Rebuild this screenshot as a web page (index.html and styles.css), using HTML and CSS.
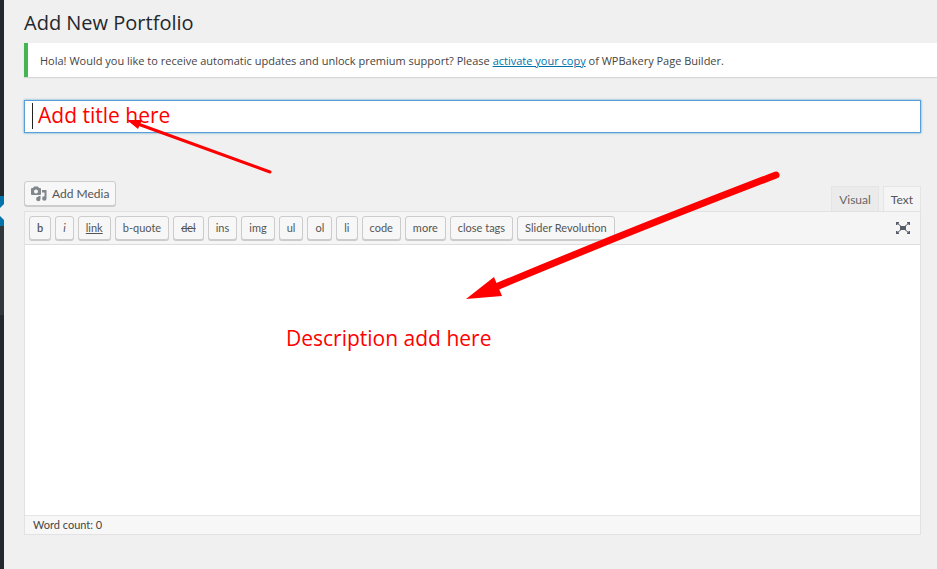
FILE: index.html
```html
<!DOCTYPE html>
<html lang="en">
<head>
<meta charset="utf-8">
<title>Add New Portfolio</title>
<link rel="stylesheet" href="styles.css">
</head>
<body>
<nav class="menu" aria-label="Admin menu">
  <div class="menu-above"></div>
  <div class="menu-current"></div>
  <div class="menu-sub"></div>
</nav>
<main class="content">
  <h1>Add New Portfolio</h1>
  <div class="notice">Hola! Would you like to receive automatic updates and unlock premium support? Please <a href="#">activate your copy</a> of WPBakery Page Builder.</div>
  <form class="editor-form">
    <div class="title-wrap">
      <input class="title" type="text" aria-label="Title">
      <span class="caret"></span>
      <span class="mark mark-title">Add title here</span>
    </div>
    <div class="tools">
      <button type="button" class="media">
        <svg width="16" height="16" viewBox="0 0 16 16" aria-hidden="true">
          <path fill="#82878c" fill-rule="evenodd" d="M1 2h1L3 .500h4L8 2h1a1 1 0 0 1 1 1v5a1 1 0 0 1-1 1H1a1 1 0 0 1-1-1V3a1 1 0 0 1 1-1zm4 1.500a2 2 0 1 0 0 4 2 2 0 0 0 0-4z"/>
          <path fill="#82878c" d="M11 4h4.500v8.500a2.200 2.200 0 1 1-2-2.200V6.500H11zM9.500 10v3a2.200 2.200 0 1 1-2-2.200V10z"/>
        </svg>
        <span>Add Media</span>
      </button>
      <div class="tabs">
        <button type="button" class="tab">Visual</button>
        <button type="button" class="tab tab-active">Text</button>
      </div>
    </div>
    <div class="editor">
      <div class="toolbar">
        <button type="button" class="tag bold">b</button>
        <button type="button" class="tag italic">i</button>
        <button type="button" class="tag link">link</button>
        <button type="button" class="tag">b-quote</button>
        <button type="button" class="tag del">del</button>
        <button type="button" class="tag">ins</button>
        <button type="button" class="tag">img</button>
        <button type="button" class="tag">ul</button>
        <button type="button" class="tag">ol</button>
        <button type="button" class="tag">li</button>
        <button type="button" class="tag">code</button>
        <button type="button" class="tag">more</button>
        <button type="button" class="tag">close tags</button>
        <button type="button" class="tag">Slider Revolution</button>
        <button type="button" class="expand" aria-label="Distraction-free writing mode">
          <svg width="16" height="14" viewBox="0 0 16 14" aria-hidden="true">
            <path d="M2 2l12 10M14 2L2 12" stroke="#555d66" stroke-width="1"/>
            <path fill="#555d66" d="M5 5h6v4H5zM1 1h3v1L2 4H1zM15 1h-3v1l2 2h1zM1 13h3v-1l-2-2H1zM15 13h-3v-1l2-2h1z"/>
          </svg>
        </button>
      </div>
      <textarea class="text" aria-label="Description"></textarea>
      <div class="status">Word count: 0</div>
      <span class="mark mark-text">Description add here</span>
    </div>
  </form>
</main>
<svg class="arrows" width="937" height="569" viewBox="0 0 937 569" aria-hidden="true">
  <path d="M270 172L138 124" stroke="#f00" stroke-width="3" stroke-linecap="round"/>
  <path d="M127 120l15 0-4 9z" fill="#f00"/>
  <path d="M776 175Q630 231 496 287" stroke="#f00" stroke-width="7" stroke-linecap="round" fill="none"/>
  <path d="M466 299l28-22 8 19z" fill="#f00"/>
</svg>
</body>
</html>
```
FILE: styles.css
```css
* { box-sizing: border-box; }
body {
  margin: 0;
  min-height: 100vh;
  display: flex;
  background: #f0f0f0;
  color: #444;
  font: 12px/18px Lato, "Noto Sans", sans-serif;
}
button, input, textarea { font: inherit; color: inherit; margin: 0; }
.menu { width: 4px; flex: none; background: #23282d; overflow: hidden; }
.menu-above { height: 196px; }
.menu-current { height: 30px; background: #0073aa; position: relative; }
.menu-current::after {
  content: "";
  position: absolute;
  right: 0;
  top: 8px;
  border: 8px solid transparent;
  border-right-color: #f0f0f0;
  border-left: 0;
}
.menu-sub { height: 89px; background: #32373c; }
.content { flex: 1; min-width: 0; padding-left: 20px; }
h1 { margin: 0; padding: 8px 0 5px; font-family: "Open Sans", sans-serif; font-size: 20px; line-height: 30px; font-weight: 400; color: #23282d; }
.notice {
  background: #fff;
  border-left: 4px solid #46b450;
  box-shadow: 0 1px 1px rgba(0,0,0,.1);
  padding: 9px 12px 7px;
  font-family: "Open Sans", sans-serif;
  font-size: 11px;
}
.notice a { color: #0073aa; }
.editor-form { padding: 23px 16px 0 0; }
.title-wrap { position: relative; }
.title {
  display: block;
  width: 100%;
  height: 33px;
  padding: 2px 8px;
  border: 1px solid #5b9dd9;
  outline: 0;
  background: #fff;
  box-shadow: 0 0 2px rgba(30,140,190,.8);
  font-size: 20px;
}
.caret { position: absolute; left: 8px; top: 3px; width: 1px; height: 26px; background: #222; }
.mark { position: absolute; color: #f00; font-family: "Open Sans", sans-serif; font-size: 21px; line-height: 30px; white-space: nowrap; }
.mark-title { left: 14px; top: 0; }
.mark-text { left: 261px; top: 111px; }
.tools { display: flex; justify-content: space-between; margin-top: 48px; height: 30px; }
.media {
  display: flex;
  align-items: center;
  gap: 5px;
  height: 25px;
  padding: 0 6px;
  border: 1px solid #ccc;
  border-radius: 3px;
  background: #f7f7f7;
  box-shadow: 0 1px 0 #ccc;
  color: #555;
}
.tabs { display: flex; gap: 4px; align-items: flex-start; padding-top: 5px; }
.tab { height: 25px; padding: 4px 7px 3px; border: 1px solid #e5e5e5; border-bottom: 0; background: #ebebeb; color: #666; }
.tab-active { position: relative; height: 26px; background: #f5f5f5; color: #555; }
.editor { position: relative; border: 1px solid #e2e2e2; }
.toolbar { display: flex; gap: 4px; height: 33px; padding: 4px; background: #f5f5f5; border-bottom: 1px solid #ddd; }
.tag {
  height: 24px;
  padding: 0 7px;
  border: 1px solid #ccc;
  border-radius: 3px;
  background: #f7f7f7;
  box-shadow: 0 1px 0 #ccc;
  color: #555;
  font-size: 11px;
  line-height: 20px;
  white-space: nowrap;
}
.bold { font-weight: 600; }
.italic { font-style: italic; }
.link { text-decoration: underline; }
.del { text-decoration: line-through; }
.expand { display: flex; align-items: center; margin-left: auto; padding: 0 5px; border: 0; background: none; }
.text { display: block; width: 100%; height: 270px; border: 0; outline: 0; resize: none; background: #fff; }
.status { padding: 0 8px; border-top: 1px solid #e5e5e5; background: #f7f7f7; font-size: 11px; }
.arrows { position: absolute; left: 0; top: 0; pointer-events: none; }
```
